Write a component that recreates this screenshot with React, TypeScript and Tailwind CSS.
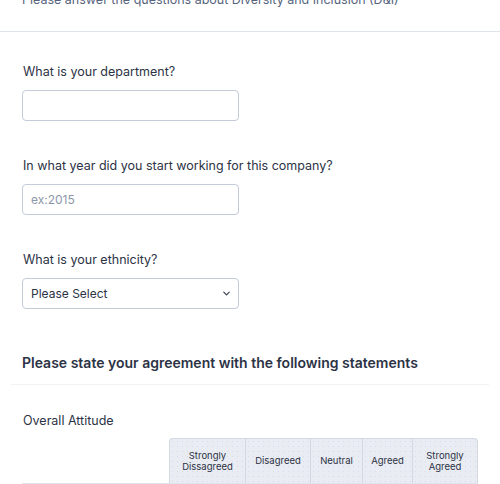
import { ChevronDown } from 'lucide-react'

const COLUMNS = ['Strongly Dissagreed', 'Disagreed', 'Neutral', 'Agreed', 'Strongly Agreed']
const WIDTHS = ['w-[77px]', 'w-[65px]', 'w-[52px]', 'w-[50px]', 'w-[65px]']

function Question({ label, children }: { label: string; children: React.ReactNode }) {
  return (
    <div className="px-[22px]">
      <label className="block pl-[1px] text-[12.5px] leading-[18px] text-[#2c3345]">{label}</label>
      <div className="mt-[9px]">{children}</div>
    </div>
  )
}

export default function App() {
  return (
    <div
      className="w-[500px] h-[484px] overflow-hidden bg-white"
      style={{ fontFamily: 'Inter, "Noto Sans", sans-serif' }}
    >
      {/* Section header, scrolled partly off screen */}
      <p className="mt-[-9px] px-[22px] text-[12.5px] leading-[18px] text-[#57647e]">
        Please answer the questions about Diversity and Inclusion (D&amp;I)
      </p>
      <div className="mt-[22px] h-px bg-[#dfe3ec]" />

      <div className="pt-[31px] flex flex-col gap-[36px]">
        <Question label="What is your department?">
          <input
            type="text"
            className="block w-[217px] h-[31px] rounded-[4px] border border-[#c3cad8] bg-white px-[8px] text-[12px] outline-none"
          />
        </Question>

        <Question label="In what year did you start working for this company?">
          <input
            type="text"
            placeholder="ex:2015"
            className="block w-[217px] h-[31px] rounded-[4px] border border-[#c3cad8] bg-white px-[8px] text-[12px] outline-none placeholder:text-[#8d96a8]"
          />
        </Question>

        <Question label="What is your ethnicity?">
          <div className="flex w-[217px] h-[31px] items-center justify-between rounded-[4px] border border-[#c3cad8] bg-white pl-[8px] pr-[6px]">
            <span className="text-[12px] text-[#2c3345]">Please Select</span>
            <ChevronDown size={11} strokeWidth={2.25} className="text-[#2c3345]" />
          </div>
        </Question>
      </div>

      {/* Matrix section */}
      <div className="mt-[43px] px-[22px]">
        <h2 className="text-[14px] leading-[22px] font-semibold text-[#2c3345]">
          Please state your agreement with the following statements
        </h2>
      </div>
      <div className="mx-[11px] mt-[10px] h-px bg-[#f1f2f6]" />

      <div className="mt-[27px] px-[22px]">
        <p className="pl-[1px] text-[12.5px] leading-[18px] text-[#2c3345]">Overall Attitude</p>

        <div className="mt-[8px] flex">
          <div className="w-[147px] shrink-0 flex flex-col">
            <div className="h-[45px]" />
            <div className="h-[20px] border-t border-l border-[#dfe3ec] bg-white" />
          </div>
          {COLUMNS.map((c, i) => (
            <div key={c} className={`${WIDTHS[i]} shrink-0 flex flex-col`}>
              <div
                className={`h-[45px] flex items-center justify-center border-t border-r border-[#d3d8e2] bg-[#e9ecf3] bg-[radial-gradient(#d6dbe6_0.6px,transparent_0.6px)] bg-[size:5px_5px] px-[4px] text-center text-[9.5px] leading-[11.5px] text-[#2c3345] ${
                  i === 0 ? 'border-l rounded-tl-[4px]' : ''
                } ${i === COLUMNS.length - 1 ? 'rounded-tr-[4px]' : ''}`}
              >
                {c}
              </div>
              <div className="h-[20px] border-t border-r border-[#dfe3ec] bg-white" />
            </div>
          ))}
        </div>
      </div>
    </div>
  )
}
